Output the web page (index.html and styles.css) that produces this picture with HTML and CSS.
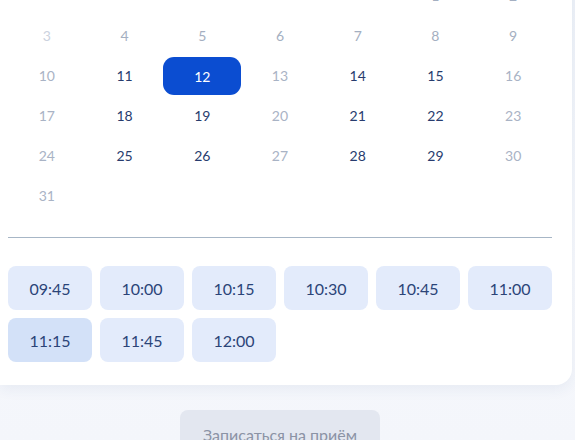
FILE: index.html
```html
<!DOCTYPE html>
<html lang="ru">
<head>
<meta charset="utf-8">
<title>Запись</title>
<link rel="stylesheet" href="styles.css">
</head>
<body>
<div class="page">
  <section class="card">
    <div class="calendar">
      <span class="day"></span><span class="day"></span><span class="day"></span><span class="day"></span><span class="day"></span>
      <span class="day past">1</span><span class="day past">2</span>
      <span class="day faint">3</span><span class="day past">4</span><span class="day past">5</span><span class="day past">6</span><span class="day past">7</span><span class="day past">8</span><span class="day past">9</span>
      <span class="day off">10</span><span class="day on">11</span><span class="day selected">12</span><span class="day off">13</span><span class="day on">14</span><span class="day on">15</span><span class="day off">16</span>
      <span class="day off">17</span><span class="day on">18</span><span class="day on">19</span><span class="day off">20</span><span class="day on">21</span><span class="day on">22</span><span class="day off">23</span>
      <span class="day off">24</span><span class="day on">25</span><span class="day on">26</span><span class="day off">27</span><span class="day on">28</span><span class="day on">29</span><span class="day off">30</span>
      <span class="day off">31</span>
    </div>
    <hr class="divider">
    <div class="slots">
      <button class="slot">09:45</button>
      <button class="slot">10:00</button>
      <button class="slot">10:15</button>
      <button class="slot">10:30</button>
      <button class="slot">10:45</button>
      <button class="slot">11:00</button>
      <button class="slot hover">11:15</button>
      <button class="slot">11:45</button>
      <button class="slot">12:00</button>
    </div>
  </section>
  <div class="actions">
    <button class="submit" disabled>Записаться на приём</button>
  </div>
</div>
</body>
</html>
```

FILE: styles.css
```css
* { box-sizing: border-box; }
html, body {
  margin: 0;
  padding: 0;
  height: 100%;
  overflow: hidden;
}
body {
  font-family: Lato, "Noto Sans", sans-serif;
  background: linear-gradient(180deg, #eef2f8 0%, #f6f8fc 60%, #f4f6fb 100%);
}
.page {
  display: flex;
  flex-direction: column;
}
.card {
  background: #ffffff;
  width: 572px;
  margin-top: -65px;
  padding: 40px 20px 23px 8px;
  border-radius: 0 0 16px 0;
  box-shadow: 0 4px 14px rgba(40, 70, 130, 0.07);
}
.calendar {
  display: grid;
  grid-template-columns: repeat(7, 1fr);
  grid-auto-rows: 40px;
  width: 544px;
}
.day {
  display: flex;
  align-items: center;
  justify-content: center;
  font-size: 14px;
  border-radius: 11px;
}
.day.faint { color: #cbd2de; }
.day.past { color: #a4afc1; }
.day.off { color: #a9b3c5; }
.day.on { color: #283c6e; }
.day.selected {
  background: #0b4dd1;
  color: #ffffff;
  margin: 2px 0 0 0;
}
.divider {
  width: 544px;
  margin: 22px 0 28px 0;
  border: none;
  border-top: 1px solid #a7b6c6;
  height: 0;
}
.slots {
  display: grid;
  grid-template-columns: repeat(6, 84px);
  grid-auto-rows: 44px;
  gap: 8px;
}
.slot {
  border: none;
  border-radius: 8px;
  background: #e3ebfb;
  color: #2b4478;
  font-family: Lato, "Noto Sans", sans-serif;
  font-size: 16px;
  padding: 0;
}
.slot.hover { background: #d3e1f8; }
.actions {
  display: flex;
  padding: 25px 0 0 180px;
}
.submit {
  width: 200px;
  height: 50px;
  border: none;
  border-radius: 8px;
  background: #e3e7f0;
  color: #8b93a5;
  font-family: Lato, "Noto Sans", sans-serif;
  font-size: 16px;
  padding: 0;
  line-height: 50px;
}
```
